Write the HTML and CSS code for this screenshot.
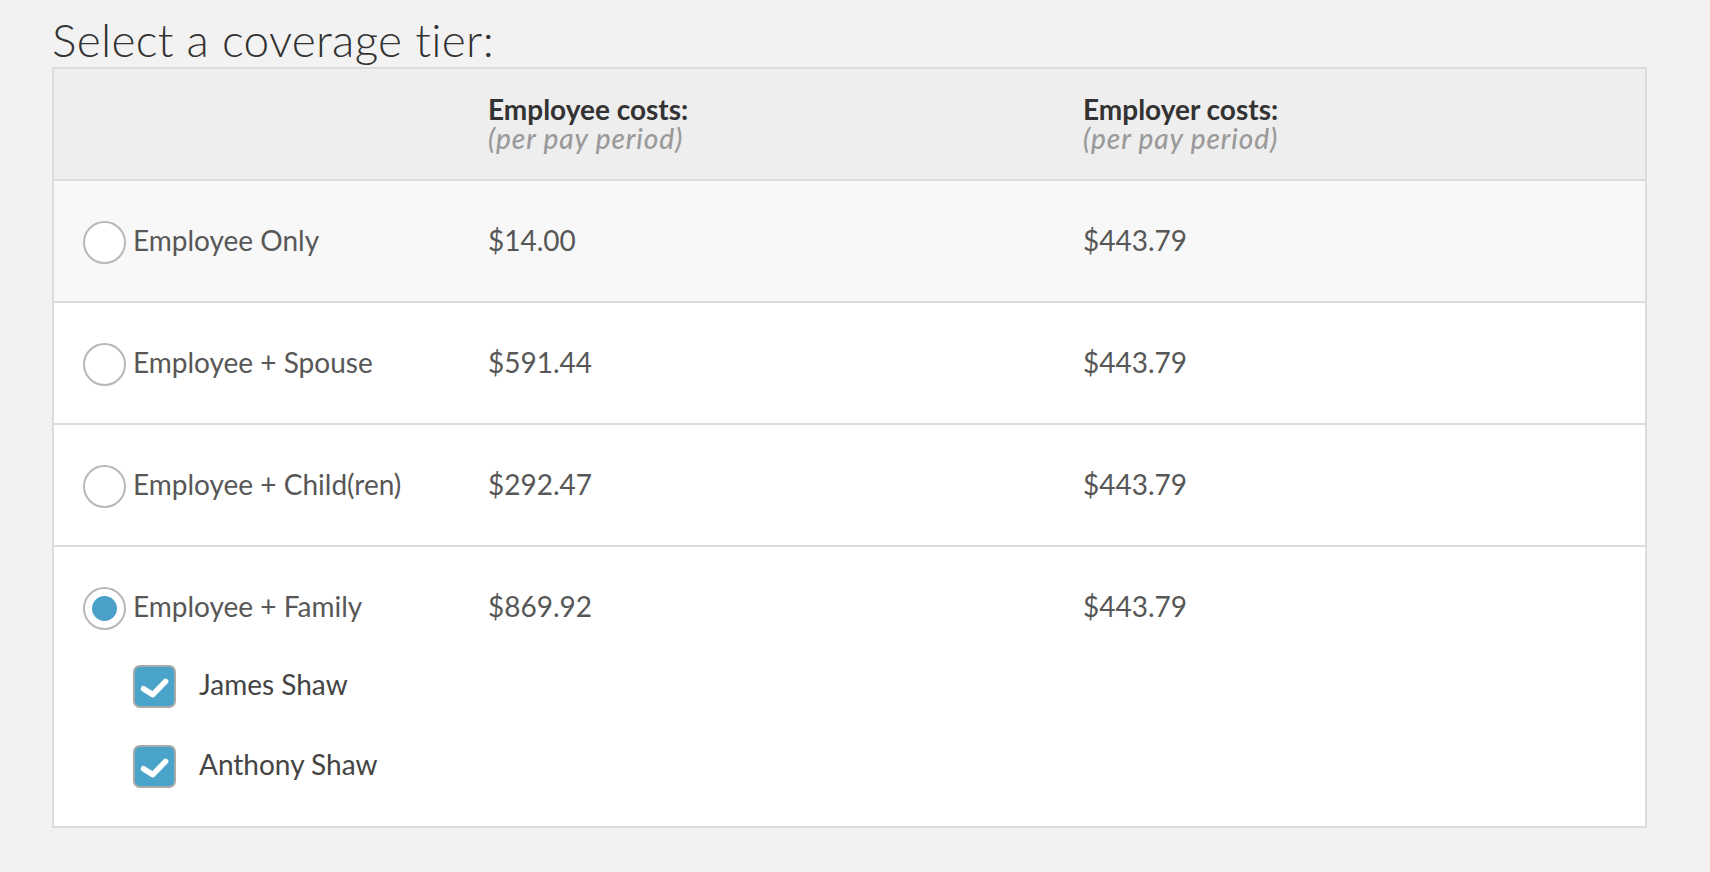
FILE: index.html
```html
<!DOCTYPE html>
<html lang="en">
<head>
<meta charset="utf-8">
<title>Select a coverage tier</title>
<link rel="stylesheet" href="styles.css">
</head>
<body>
<main class="page">
  <h1 class="title">Select a coverage tier:</h1>
  <section class="tiers">
    <div class="tier-head grid">
      <div></div>
      <div class="head-cell">
        <div class="head-main">Employee costs:</div>
        <div class="head-sub">(per pay period)</div>
      </div>
      <div class="head-cell">
        <div class="head-main">Employer costs:</div>
        <div class="head-sub">(per pay period)</div>
      </div>
    </div>

    <div class="tier-row grid row-shaded">
      <div class="label"><span class="radio"></span><span class="label-text">Employee Only</span></div>
      <div class="price">$14.00</div>
      <div class="price">$443.79</div>
    </div>

    <div class="tier-row grid">
      <div class="label"><span class="radio"></span><span class="label-text">Employee + Spouse</span></div>
      <div class="price">$591.44</div>
      <div class="price">$443.79</div>
    </div>

    <div class="tier-row grid">
      <div class="label"><span class="radio"></span><span class="label-text">Employee + Child(ren)</span></div>
      <div class="price">$292.47</div>
      <div class="price">$443.79</div>
    </div>

    <div class="tier-row grid row-last">
      <div class="label-group">
        <div class="label"><span class="radio radio-on"></span><span class="label-text">Employee + Family</span></div>
        <div class="dependents">
          <div class="dep">
            <span class="check"><svg viewBox="2 2 39 39" width="39" height="39"><path d="M10.6 23.8 L19.8 29.6 L32.6 16.4" fill="none" stroke="#fff" stroke-width="5.6" stroke-linecap="round" stroke-linejoin="round"/></svg></span>
            <span class="dep-name">James Shaw</span>
          </div>
          <div class="dep">
            <span class="check"><svg viewBox="2 2 39 39" width="39" height="39"><path d="M10.6 23.8 L19.8 29.6 L32.6 16.4" fill="none" stroke="#fff" stroke-width="5.6" stroke-linecap="round" stroke-linejoin="round"/></svg></span>
            <span class="dep-name">Anthony Shaw</span>
          </div>
        </div>
      </div>
      <div class="price">$869.92</div>
      <div class="price">$443.79</div>
    </div>
  </section>
</main>
</body>
</html>
```

FILE: styles.css
```css
html, body {
  margin: 0;
  padding: 0;
  background: #f2f2f2;
}

body {
  font-family: "Lato", "Liberation Sans", sans-serif;
  color: #555;
}

.page {
  padding: 17px 0 0 52px;
}

.title {
  margin: 0 0 5px 0;
  font-size: 46px;
  line-height: 45px;
  font-weight: 300;
  letter-spacing: 0.3px;
  color: #333;
}

.tiers {
  width: 1595px;
  box-sizing: border-box;
  border: 2px solid #dcdcdc;
  background: #fff;
}

.grid {
  display: grid;
  grid-template-columns: 405px 595px 1fr;
  padding-left: 29px;
}

.tier-head {
  background: #eeeeee;
  padding-top: 26px;
  padding-bottom: 26px;
}

.head-cell {
  font-size: 28px;
  line-height: 29px;
}

.head-main {
  font-weight: 700;
  color: #333;
}

.head-sub {
  font-style: italic;
  font-weight: 500;
  letter-spacing: 0.9px;
  color: #9a9a9a;
}

.tier-row {
  border-top: 2px solid #dcdcdc;
  padding-top: 40px;
  padding-bottom: 37px;
  background: #fff;
}

.row-shaded {
  background: #f8f8f8;
}

.row-last {
  padding-bottom: 38px;
}

.label {
  display: flex;
  align-items: flex-start;
  gap: 7px;
}

.radio {
  box-sizing: border-box;
  width: 43px;
  height: 43px;
  flex: 0 0 43px;
  border: 2px solid #b8b8b8;
  border-radius: 50%;
  background: #fff;
  display: flex;
  align-items: center;
  justify-content: center;
}

.radio-on::after {
  content: "";
  width: 25px;
  height: 25px;
  border-radius: 50%;
  background: #4aa0c8;
}

.label-text,
.price {
  font-size: 28px;
  line-height: 39px;
  color: #575757;
  white-space: nowrap;
}

.dependents {
  display: flex;
  flex-direction: column;
  gap: 37px;
  margin-top: 35px;
  padding-left: 50px;
}

.dep {
  display: flex;
  align-items: flex-start;
  gap: 23px;
}

.check {
  box-sizing: border-box;
  width: 43px;
  height: 43px;
  flex: 0 0 43px;
  border: 2px solid #a9a9a9;
  border-radius: 7px;
  background: #4aa3c8;
  display: flex;
  align-items: center;
  justify-content: center;
}

.check svg {
  display: block;
}

.dep-name {
  font-size: 28px;
  line-height: 39px;
  color: #444;
}
```
